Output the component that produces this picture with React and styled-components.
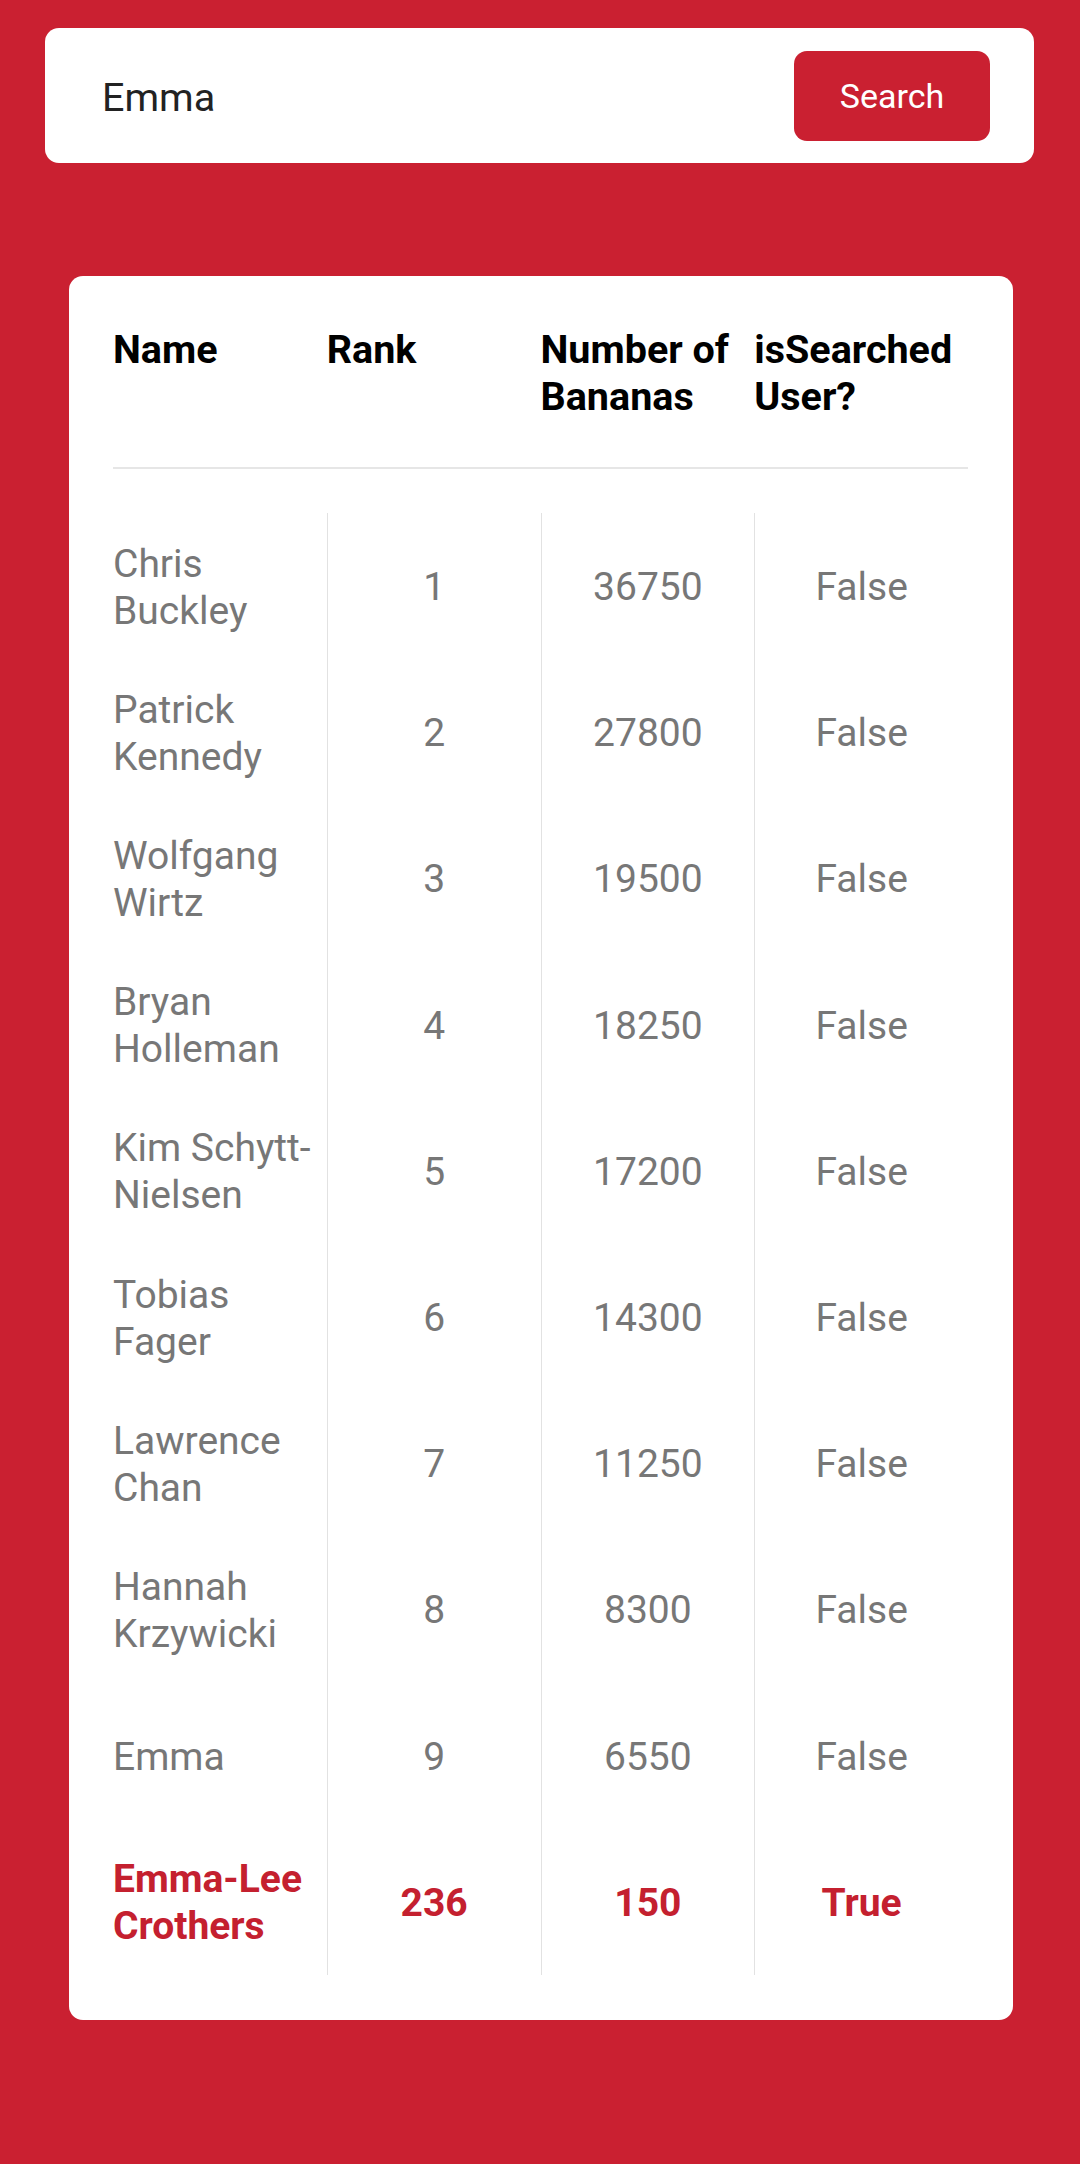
import styled, { createGlobalStyle } from "styled-components"

const GlobalStyle = createGlobalStyle`
  html, body {
    margin: 0;
    padding: 0;
    background: #ca2031;
    font-family: Roboto, "Liberation Sans", sans-serif;
  }
  *{
    box-sizing: border-box;
  }
`

const Page = styled.div`
  min-height: 2164px;
  background: #ca2031;
  padding: 28px 46px 0 45px;
`

const SearchBar = styled.form`
  height: 135px;
  background: #fff;
  border-radius: 14px;
  display: flex;
  align-items: center;
  padding: 0 44px 0 57px;
  input{
    flex: 1;
    border: none;
    outline: none;
    background: transparent;
    font-family: inherit;
    font-size: 39.5px;
    color: #222;
    padding: 3px 0 0;
  }
  button{
    width: 196px;
    height: 90px;
    border: none;
    border-radius: 13px;
    background: #ca2031;
    color: #fff;
    font-family: inherit;
    font-size: 34px;
    padding-top: 2px;
  }
`

const Board = styled.div`
  margin: 113px 21px 0 24px;
  background: #fff;
  border-radius: 14px;
  padding: 50px 45px 45px 44px;
`

const Grid = styled.div`
  display: grid;
  grid-template-columns: repeat(4, 1fr);
`

const Head = styled(Grid)`
  padding-bottom: 47px;
  border-bottom: 2px solid #e6e6e6;
  margin-bottom: 44px;
`

const HeadCell = styled.div`
  font-size: 39.5px;
  line-height: 47px;
  font-weight: 700;
  color: #000;
`

const Row = styled(Grid)`
  height: 146.2px;
`

const Cell = styled.div`
  display: flex;
  align-items: center;
  justify-content: ${p => (p.$name ? "flex-start" : "center")};
  border-left: ${p => (p.$name ? "none" : "1px solid #e2e2e2")};
  font-size: 39px;
  line-height: 47px;
  font-weight: ${p => (p.$me ? 700 : 400)};
  color: ${p => (p.$me ? "#c4202f" : "#777")};
  padding: 3px ${p => (p.$name ? "4px" : "0")} 0 0;
`

const users = [
  ["Chris Buckley", 1, 36750, false],
  ["Patrick Kennedy", 2, 27800, false],
  ["Wolfgang Wirtz", 3, 19500, false],
  ["Bryan Holleman", 4, 18250, false],
  ["Kim Schytt-Nielsen", 5, 17200, false],
  ["Tobias Fager", 6, 14300, false],
  ["Lawrence Chan", 7, 11250, false],
  ["Hannah Krzywicki", 8, 8300, false],
  ["Emma", 9, 6550, false],
  ["Emma-Lee Crothers", 236, 150, true],
]

export default function App() {
  return (
    <Page>
      <GlobalStyle />
      <SearchBar onSubmit={e => e.preventDefault()}>
        <input type="text" defaultValue="Emma" />
        <button type="submit">Search</button>
      </SearchBar>
      <Board>
        <Head>
          <HeadCell>Name</HeadCell>
          <HeadCell>Rank</HeadCell>
          <HeadCell>Number of Bananas</HeadCell>
          <HeadCell>isSearched User?</HeadCell>
        </Head>
        {users.map(([name, rank, bananas, me]) => (
          <Row key={name}>
            <Cell $name $me={me}>{name}</Cell>
            <Cell $me={me}>{rank}</Cell>
            <Cell $me={me}>{bananas}</Cell>
            <Cell $me={me}>{me ? "True" : "False"}</Cell>
          </Row>
        ))}
      </Board>
    </Page>
  )
}
